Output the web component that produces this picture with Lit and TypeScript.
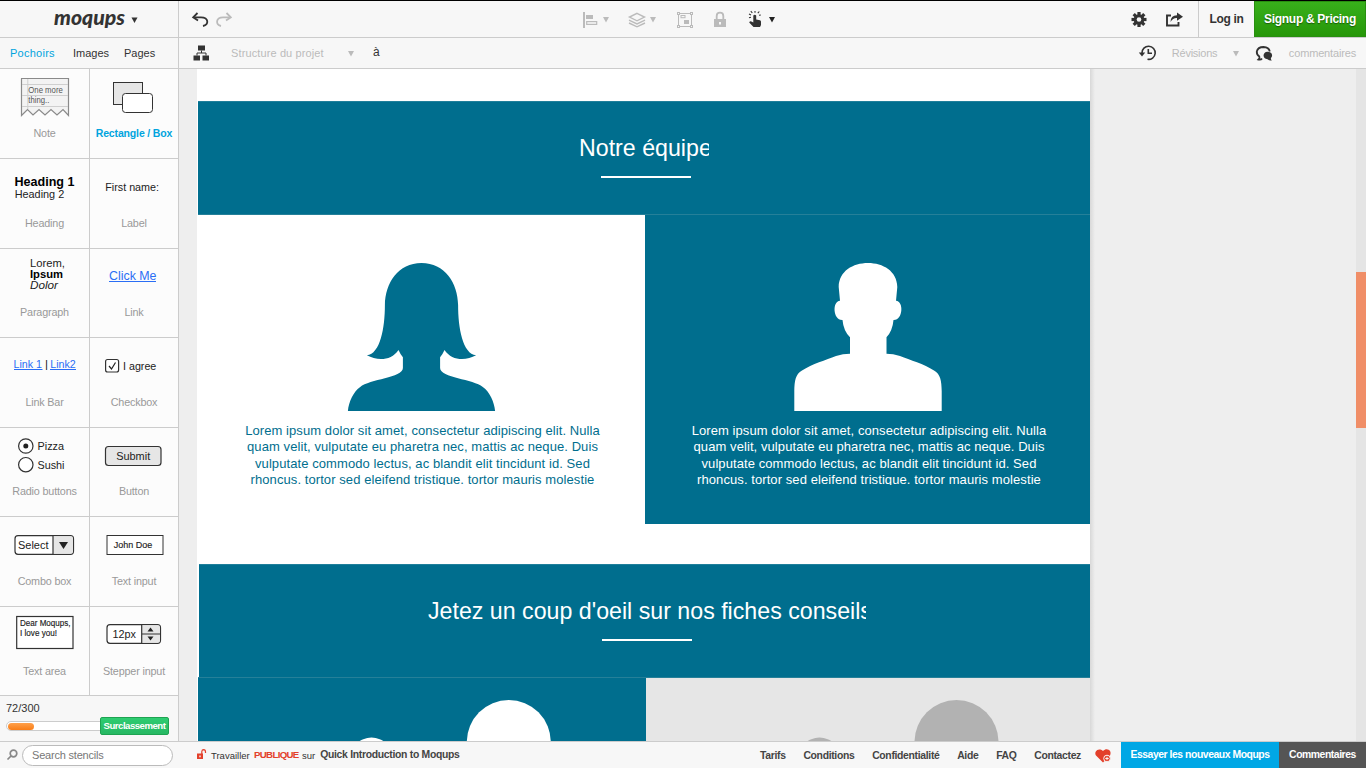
import { LitElement, html, svg, css } from "lit";
import { customElement, property } from "lit/decorators.js";

const caret = svg`<path d="M0 0H6L3 5.5Z" fill="currentColor"/>`;

/* Text fragment inside a stencil preview: x, baseline, width, size. */
const st = (s: string, x: number, y: number, w: number, size: number, cls = "") =>
  svg`<text class=${cls} x=${x} y=${y} textLength=${w} lengthAdjust="spacingAndGlyphs" font-size=${size}>${s}</text>`;

const stencils = [
  { label: "Note", art: svg`
    <path d="M21 9.5H68.5V46.5L63 40.5L57 46L51 40.5L45 46L39 40.5L33 46L27.5 40.5L21.5 46.5V9.5" fill="#f3f3f3" stroke="#8a8a8a" stroke-width="1.2"/>
    <path d="M22 15.5H68M22 26.5H68M22 37.5H68M27.8 10V40" stroke="#cfcfcf" stroke-width="1"/>
    <g fill="#555">${st("One more", 28.3, 24, 34.5, 9)}${st("thing..", 28.3, 34, 21, 9)}</g>` },
  { label: "Rectangle / Box", active: true, art: svg`
    <rect x="23.5" y="13.5" width="29" height="22" fill="#e6e6e6" stroke="#333"/>
    <rect x="32.5" y="24.5" width="30" height="19" rx="3" fill="#fff" stroke="#333"/>` },
  { label: "Heading", art: svg`${st("Heading 1", 14.5, 26.5, 60, 12.5, "b")}${st("Heading 2", 14.7, 39.3, 49.5, 11)}` },
  { label: "Label", art: st("First name:", 15.3, 31.5, 53.7, 11) },
  { label: "Paragraph", art: svg`${st("Lorem,", 30, 18.3, 35, 11)}${st("Ipsum", 30, 29.3, 33, 11, "b")}${st("Dolor", 30, 40.3, 28, 11, "i")}` },
  { label: "Link", art: svg`<g fill="#2a6ef5">${st("Click Me", 19, 31, 47.5, 12.5)}<rect x="19" y="32" width="47" height="1"/></g>` },
  { label: "Link Bar", art: svg`<g fill="#2a6ef5">${st("Link 1", 13.5, 30, 28.5, 11)}${st("Link2", 50.3, 30, 25.5, 11)}
    <rect x="14" y="31" width="28.5" height="1"/><rect x="50" y="31" width="26" height="1"/></g>${st("|", 45, 30, 3, 11)}` },
  { label: "Checkbox", art: svg`<rect x="15.6" y="21.5" width="13" height="12.5" rx="2" fill="#fff" stroke="#333" stroke-width="1.2"/>
    <path d="M19 28L21.5 31L25.5 24.5" fill="none" stroke="#222" stroke-width="1.2"/>${st("I agree", 33, 31.7, 33.3, 11)}` },
  { label: "Radio buttons", art: svg`<g fill="#fff" stroke="#333" stroke-width="1.2"><circle cx="25.8" cy="18" r="7.2"/><circle cx="25.8" cy="36.7" r="7.2"/></g>
    <circle cx="25.8" cy="18" r="2.5"/>${st("Pizza", 37.5, 22, 26.5, 11)}${st("Sushi", 37.5, 40.7, 27, 11)}` },
  { label: "Button", art: svg`<rect x="15.5" y="18.5" width="55.5" height="19" rx="3" fill="#e6e6e6" stroke="#333" stroke-width="1.2"/>${st("Submit", 26.2, 31.7, 34, 11.5)}` },
  { label: "Combo box", art: svg`<rect x="15" y="18.7" width="58.5" height="18.6" rx="3" fill="#fff" stroke="#333" stroke-width="1.2"/>
    <path d="M53 19.3H71Q73 19.3 73 21.5V34.5Q73 36.7 71 36.7H53Z" fill="#e6e6e6"/><path d="M53 19V37" stroke="#333" stroke-width="1.2"/>
    <path d="M59 25H68L63.5 32Z"/>${st("Select", 18, 31.7, 30.5, 11.7)}` },
  { label: "Text input", art: svg`<rect x="17" y="18.5" width="56" height="19" fill="#fff" stroke="#333"/>${st("John Doe", 23.7, 31, 38.5, 9, "m")}` },
  { label: "Text area", art: svg`<rect x="16.7" y="9.5" width="56.3" height="32" fill="#fff" stroke="#333" stroke-width="1.2"/>${st("Dear Moqups,", 20, 19, 50.5, 8.3, "m")}${st("I love you!", 20, 28.7, 37, 8.3, "m")}` },
  { label: "Stepper input", art: svg`<rect x="17" y="17.7" width="53.5" height="18.6" rx="3" fill="#fff" stroke="#333" stroke-width="1.2"/>
    <path d="M52 18.3H68Q70 18.3 70 20.5V33.5Q70 35.7 68 35.7H52Z" fill="#e6e6e6"/><path d="M51.7 18V36M52 27H70.5" stroke="#333" stroke-width="1.2"/>
    <path d="M57.5 24.5H63.5L60.5 20.5ZM57.5 29.5H63.5L60.5 33.5Z"/>${st("12px", 22.5, 31, 23.5, 11)}` },
];

@customElement("stencil-tile")
class StencilTile extends LitElement {
  @property({ attribute: false }) item: any;
  @property({ type: Boolean }) low = false;
  static styles = css`
    :host { display: flex; flex-direction: column; align-items: center; background: #fcfcfc; border-right: 1px solid #ccc; border-bottom: 1px solid #ccc; box-sizing: border-box; min-width: 0; }
    .art { display: block; width: 89px; height: 56px; margin-bottom: -1px; fill: #222; font-family: "Liberation Sans", sans-serif; }
    .b { font-weight: bold; fill: #000; } .i { font-style: italic; } .m { stroke: #222; stroke-width: .15px; }
    .label { font: 10.8px/16px "Liberation Sans", sans-serif; letter-spacing: -.17px; color: #999; white-space: nowrap; }
    .low { padding-top: 1px; }
    .active { color: #00a4de; font-weight: bold; font-size: 10.5px; letter-spacing: -.15px; }
  `;
  render() {
    return html`<svg class="art" viewBox="0 0 89 56">${this.item.art}</svg>
      <span class="label ${this.item.active ? "active" : ""} ${this.low ? "low" : ""}">${this.item.label}</span>`;
  }
}

const bodyCopy = ["Lorem ipsum dolor sit amet, consectetur adipiscing elit. Nulla", "quam velit, vulputate eu pharetra nec, mattis ac neque. Duis", "vulputate commodo lectus, ac blandit elit tincidunt id. Sed", "rhoncus. tortor sed eleifend tristique. tortor mauris molestie"];

@customElement("app-root")
class AppRoot extends LitElement {
  static styles = css`
    :host { display: grid; grid-template-rows: 37px 31px minmax(0, 1fr) 27px; width: 1366px; height: 768px; box-sizing: border-box; border-top: 1px solid #000; overflow: hidden; background: #f7f7f7; color: #333; font: 11px/16px "Liberation Sans", Arial, sans-serif; }
    * { box-sizing: border-box; }
    svg { display: block; flex: none; overflow: visible; }
    .bar { display: flex; border-bottom: 1px solid #ccc; white-space: nowrap; }
    .left { width: 179px; border-right: 1px solid #ccc; display: flex; flex: none; }
    .logo { margin-left: 50px; }
    .logo text { font: italic 900 20px Lato, sans-serif; fill: #333; }
    .tools { flex: 1; display: flex; align-items: center; }
    .undo { margin-left: 13px; }
    .align { margin-left: 350px; }
    .soft { color: #bbb; }
    .gear { margin-left: auto; margin-right: 1px; }
    .share { margin: 0 15px 0 18px; }
    .login { width: 56px; border-left: 1px solid #ccc; text-align: center; font: bold 12px/37px "Liberation Sans", sans-serif; letter-spacing: -.35px; }
    .signup { width: 112px; background: linear-gradient(#38b01b, #279709); border: 1px solid #288f10; color: #fff; text-align: center; font: bold 12px/35px "Liberation Sans", sans-serif; letter-spacing: -.3px; text-shadow: 0 1px 1px #185c06; }
    .tabs { align-items: center; padding-left: 10px; }
    .tabs .on { color: #00a4de; width: 63px; letter-spacing: .25px; }
    .tabs .im { width: 51px; }
    .tree { margin-left: 15px; }
    .struct { margin-left: 22px; width: 117px; letter-spacing: .12px; }
    .drop { margin-top: 1px; }
    .a { font-size: 12px; margin: -3px 0 0 19px; color: #333; }
    .hist { margin-left: auto; }
    .rev { margin-left: 16px; width: 61px; letter-spacing: -.25px; }
    .chat { margin: 0 17px 0 17px; }
    .com { margin-right: 10px; letter-spacing: -.16px; }
    .main { display: flex; min-height: 0; }
    .side { display: flex; flex-direction: column; width: 179px; border-right: 1px solid #ccc; flex: none; background: #f7f7f7; }
    .stencils { display: grid; grid-template-columns: 90px 89px; grid-template-rows: 90px 90px 89px 90px 89px 90px 89px; width: 179px; }
    .quota { padding: 4px 0 0 6px; color: #333; }
    .meter-row { display: flex; align-items: center; margin-top: 1px; }
    .meter { width: 95px; height: 10px; margin-right: -1px; border: 1px solid #ccc; border-radius: 6px 0 0 6px; background: #fff; padding: 1px; }
    .fill { width: 26px; height: 7px; border-radius: 4px; background: linear-gradient(#ffa04a, #f87d17); }
    .upgrade { width: 69px; height: 18px; border: 1px solid #1ea351; border-radius: 2px; background: linear-gradient(#2ecc71, #27b863); color: #fff; font: bold 9.6px/16px "Liberation Sans", sans-serif; letter-spacing: -.5px; text-align: center; }
    .canvas { flex: 1; display: flex; background: #eee; overflow: hidden; padding-left: 18px; }
    .page { width: 893px; background: #fff; flex: none; height: 673px; overflow: hidden; padding-top: 32px; }
    .shade { width: 5px; background: linear-gradient(90deg, #d8d8d8, #eee); }
    .track { margin-left: auto; width: 10px; background: #e5e5e5; padding-top: 203px; }
    .thumb { height: 156px; background: #f08e67; }
    .band { margin-left: 1px; height: 113px; background: #006e8e; color: #fff; display: flex; flex-direction: column; align-items: center; padding-top: 33px; border-top: 1px solid #1f7f9b; }
    .second { margin-left: 2px; }
    .title { white-space: nowrap; overflow: hidden; font-size: 23.2px; line-height: 26px; }
    .t1 { width: 130px; }
    .t2 { width: 438px; margin-left: 5px; }
    .rule { width: 90px; height: 2px; background: #fff; margin-top: 15px; margin-left: 3px; }
    .second .rule { margin-left: 5px; }
    .row { display: grid; grid-template-columns: 447px 445px; margin-left: 1px; border-top: 1px solid #258099; }
    .tips { grid-template-columns: 448px 444px; }
    .team { margin-bottom: 40px; }
    .card { height: 309px; display: flex; flex-direction: column; align-items: center; padding-top: 48px; color: #006e8e; fill: #006e8e; }
    .dark { background: #006e8e; color: #fff; fill: #fff; }
    .copy { width: 400px; margin: 12px 0 0 2px; height: 62px; overflow: hidden; text-align: center; font-size: 13px; letter-spacing: .08px; line-height: 16.4px; white-space: nowrap; }
    .right-card svg { margin-left: 1px; } .right-card .copy { margin-left: 3px; }
    .tip { height: 63px; overflow: hidden; }
    .grey { background: #e6e6e6; fill: #b2b2b2; }
    .status { display: flex; border-top: 1px solid #ccc; font-size: 9.5px; line-height: 27px; white-space: nowrap; }
    .search { width: 179px; display: flex; align-items: center; padding-left: 6px; gap: 4px; flex: none; }
    .field { width: 151px; height: 21px; border: 1px solid #bbb; border-radius: 11px; background: #fff; color: #777; padding-left: 9px; font-size: 11px; letter-spacing: -.2px; line-height: 19px; }
    .lock { margin: 7px 5px 0 18px; }
    .pub { color: #e3402b; font-weight: bold; width: 48px; margin-left: 4px; font-size: 9.7px; line-height: 26px; letter-spacing: -.68px; }
    .trav { width: 39px; }
    .doc { font-weight: bold; margin-left: 5px; color: #444; font-size: 10.4px; letter-spacing: -.3px; line-height: 26px; }
    .nav { margin-left: auto; display: flex; gap: 17.7px; font-weight: bold; color: #444; margin-right: 14px; line-height: 27px; font-size: 10.4px; letter-spacing: -.32px; }
    .heart { margin: 7px 10px 0 0; }
    .try, .feed { color: #fff; font-weight: bold; text-align: center; font-size: 10.4px; line-height: 26px; letter-spacing: -.45px; }
    .try { width: 158px; background: #00a7e5; } .feed { width: 87px; background: #555; }
  `;
  render() {
    const copy = html`<div class="copy">${bodyCopy.map((l) => html`<div>${l}</div>`)}</div>`;
    return html`
    <div class="bar">
      <div class="left"><svg class="logo" width="90" height="36" viewBox="50 1 90 36">
        <text x="54" y="25" textLength="71" lengthAdjust="spacingAndGlyphs">moqups</text><g transform="translate(131.500 17.500)">${caret}</g>
      </svg></div>
      <div class="tools">
        <svg class="undo" width="40" height="16" viewBox="192 11 40 16" fill="none" stroke-width="1.8">
          <g stroke="#333"><path d="M194.5 17.3H201C209 17.3 209 24.8 203 26"/><path d="M197.5 13L193.2 17.3L198 20.5"/></g>
          <g stroke="#bbb"><path d="M229.5 17.3H223C215.5 17.3 215.5 24.8 221 26"/><path d="M226.5 13L230.8 17.3L226 20.5"/></g>
        </svg>
        <svg class="align soft" width="196" height="18" viewBox="582 10 196 18" fill="currentColor">
          <path d="M583 12H585V28H583ZM586 15H593V19H586Z"/><rect x="586.7" y="21.6" width="10" height="2.8" fill="none" stroke="currentColor" stroke-width="1.2"/>
          <g transform="translate(603 17)">${caret}</g>
          <path d="M637 13.3L644.5 17L637 20.8L629.5 17Z" fill="none" stroke="currentColor" stroke-width="1.4"/>
          <path d="M629 20.2L637 24L645 20.2M629 23L637 26.8L645 23" fill="none" stroke="currentColor" stroke-width="1.4"/>
          <g transform="translate(650 17)">${caret}</g>
          <path d="M678.5 13.5H691.5V26.5H678.5Z" fill="none" stroke="currentColor"/>
          <g fill="#f7f7f7" stroke="currentColor"><rect x="677.5" y="12.5" width="2" height="2"/><rect x="690.5" y="12.5" width="2" height="2"/><rect x="677.5" y="25.5" width="2" height="2"/><rect x="690.5" y="25.5" width="2" height="2"/><rect x="681" y="15.5" width="4" height="2.2"/></g>
          <path d="M684 20H689V24H684Z"/>
          <path d="M714 19H726V27H714Z"/><path d="M716.7 20V16Q716.7 12.7 720 12.7Q723.3 12.7 723.3 16V20" fill="none" stroke="currentColor" stroke-width="1.8"/><path d="M719 22h2v2.5h-2z" fill="#f7f7f7"/>
          <g fill="#333"><path d="M753.3 15.5Q754.700 14 756.200 15.500V19.500L760 20.300Q761.300 20.800 761 22V25L760 27H753.5L749.2 22.5Q750 20.300 752 21.700L753.3 22.5Z"/>
          <path d="M749 14L751 15M750.8 11.2L752.3 13M755 11V12.7M759.3 11.5L757.8 13.2M760.8 15L759 15.3M749 17.8L751 17.2" stroke="#333" stroke-width="1.1"/><g color="#222" transform="translate(769 17)">${caret}</g></g>
        </svg>
        <svg class="gear" width="16" height="16" viewBox="-8 -8.500 16 16"><g fill="#333">${[0, 45, 90, 135].map((a) => svg`<rect x="-1.6" y="-7.5" width="3.2" height="15" transform="rotate(${a})"/>`)}<circle r="5.3"/></g><circle r="2.3" fill="#f7f7f7"/></svg>
        <svg class="share" width="17" height="14" viewBox="1166 12.500 17 14"><path d="M1171 16H1167V26H1178.5V22.5" fill="none" stroke="#333" stroke-width="1.9"/><path d="M1177 13L1183 17.2L1177 21.2V18.6Q1173 18.3 1170.5 22.5Q1170.5 16 1177 15.8Z" fill="#333"/></svg>
      </div>
      <div class="login">Log in</div><div class="signup">Signup &amp; Pricing</div>
    </div>
    <div class="bar">
      <div class="left tabs"><span class="on">Pochoirs</span><span class="im">Images</span><span>Pages</span></div>
      <div class="tools soft">
        <svg class="tree" width="15" height="15" viewBox="194 45.500 15 15" fill="#333"><path d="M198 45H205V50H198ZM193.500 55H200V60H193.500ZM202.500 55H209V60H202.500Z"/><path d="M201.500 50V52.500M197 55V52.500H206V55" fill="none" stroke="#333"/></svg>
        <span class="struct">Structure du projet</span><svg class="drop" width="6" height="5">${caret}</svg>
        <span class="a">à</span>
        <svg class="hist" width="17" height="16" viewBox="1139 45 17 16" fill="none" stroke="#333" stroke-width="1.6"><path d="M1142 53A6.600 6.600 0 1 1 1147.500 59.300"/><path d="M1138.800 52.500H1145.200L1142 56.500Z" fill="#333" stroke="none"/><path d="M1148.300 49V53.300H1152"/></svg>
        <span class="rev">Révisions</span><svg class="drop" width="6" height="5">${caret}</svg>
        <svg class="chat" width="16" height="15" viewBox="1256 45 16 15"><path d="M1262 57.500Q1261 59 1258.500 58.500Q1260 57 1259.300 55.500Q1256.500 53.500 1256.800 50.500Q1257.800 46 1263.500 46Q1269 46.200 1269.800 50.500" fill="none" stroke="#333" stroke-width="1.8"/><path d="M1267.500 50.800C1262.500 50.800 1262 58 1267.500 58.300Q1269.500 60 1271.800 59.500Q1270.500 58 1271 57C1273.500 54.500 1271.500 50.800 1267.500 50.800Z" fill="#333"/></svg>
        <span class="com">commentaires</span>
      </div>
    </div>
    <div class="main">
      <div class="side">
        <div class="stencils">${stencils.map((s, i) => html`<stencil-tile .item=${s} ?low=${![2, 4].includes(i >> 1)}></stencil-tile>`)}</div>
        <div class="quota">72/300<div class="meter-row"><div class="meter"><div class="fill"></div></div><div class="upgrade">Surclassement</div></div></div>
      </div>
      <div class="canvas">
        <div class="page">
          <div class="band"><div class="title t1">Notre équipe</div><div class="rule"></div></div>
          <div class="row team">
            <div class="card left-card"><svg width="149" height="148" viewBox="0 0 148.600 148"><path d="M.7 148C1.500 139 6 129 13 124C22 116 55.700 115 55.700 105V94.300Q53 91 51.300 87C44 98 30 98 19.700 92.300C33 91 37.700 65 37.700 42C38 20 51 0 74.300 0C97.600 0 110.600 20 110.900 42C110.900 65 115.600 91 128.900 92.300C118.600 98 104.600 98 97.300 87Q95.600 91 92.900 94.300V105C92.900 115 126.600 116 135.600 124C142.600 129 147.100 139 147.900 148Z"/></svg>${copy}</div>
            <div class="card right-card dark"><svg width="148" height="148" viewBox="0 0 148 148"><path d="M.3 148V128C.5 118 1.500 111 8 107.500C18 101 32 97 42 93Q49 90.700 56 90.700V74.300Q49.500 68 48.500 57C39 57.500 38 38 46 37.700L44.700 24C45 8 59 0 74 0C89 0 103 8 103.300 24L102 37.700C110 38 109 57.500 99.500 57Q98.500 68 92.500 74.300V90.700Q99 90.700 106 93C116 97 130 101 140 107.500C146.500 111 147.500 118 147.700 128V148Z"/></svg>${copy}</div>
          </div>
          <div class="band second"><div class="title t2">Jetez un coup d'oeil sur nos fiches conseils</div><div class="rule"></div></div>
          <div class="row tips">
            <div class="tip dark"><svg width="447" height="63"><circle cx="310.800" cy="64" r="42"/><circle cx="173.500" cy="81" r="21.500"/></svg></div>
            <div class="tip grey"><svg width="444" height="63"><circle cx="310.500" cy="64" r="42"/><circle cx="173.500" cy="81" r="21.500"/></svg></div>
          </div>
        </div>
        <div class="shade"></div>
        <div class="track"><div class="thumb"></div></div>
      </div>
    </div>
    <div class="status">
      <div class="search"><svg width="12" height="12" viewBox="0 0 12 12" fill="none" stroke="#888" stroke-width="1.700"><circle cx="7.500" cy="4.500" r="3.300"/><path d="M5 7L1.500 10.500"/></svg><div class="field">Search stencils</div></div>
      <svg class="lock" width="9" height="10" viewBox="0 0 9 10"><path d="M0 4.500H6V10H0Z" fill="#e3402b"/><path d="M4.800 5V2.500Q5 .7 6.700 .7Q8.500 .8 8.500 3V4" fill="none" stroke="#e3402b" stroke-width="1.200"/><path d="M2.300 6.500H3.700V8.300H2.300Z" fill="#f7f7f7"/></svg>
      <span class="trav">Travailler</span><span class="pub">PUBLIQUE</span><span>sur</span><span class="doc">Quick Introduction to Moqups</span>
      <div class="nav"><span>Tarifs</span><span>Conditions</span><span>Confidentialité</span><span>Aide</span><span>FAQ</span><span>Contactez</span></div>
      <svg class="heart" width="16" height="14" viewBox="0 0 16 14"><path d="M8 13.500L1 6.500C-1.500 2.500 3.500-2 8 2C12-2 17.500 2 15 6.500Z" fill="#e3402b"/><circle cx="12" cy="9.500" r="3.300" fill="#e3402b" stroke="#f7f7f7"/><path d="M10.300 9.500H13.700M12 7.800V11.200" stroke="#f7f7f7"/></svg>
      <div class="try">Essayer les nouveaux Moqups</div><div class="feed">Commentaires</div>
    </div>`;
  }
}
